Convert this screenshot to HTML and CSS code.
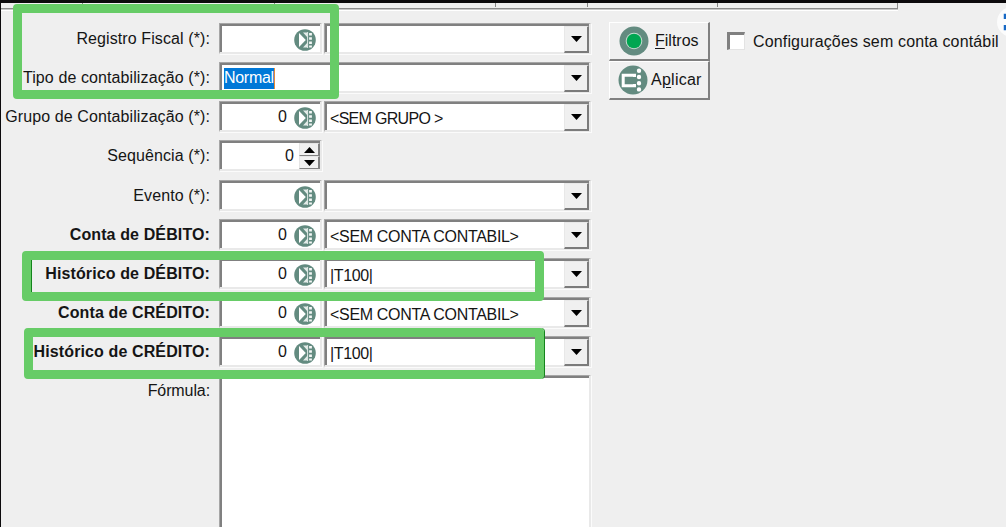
FILE: index.html
```
<!DOCTYPE html>
<html lang="pt-BR">
<head>
  <meta charset="UTF-8" />
  <title>Configurações contábeis</title>
  <link rel="stylesheet" href="styles.css">
</head>
<body>
  <svg width="0" height="0" class="defs">
    <symbol id="lookup" viewBox="0 0 22 22">
      <circle cx="11" cy="11" r="10.8" fill="#638b80"/>
      <path d="M5 4 L11.8 11 L5 18 Z" fill="#fff"/>
      <path d="M9 3.5 H14 V9 Z M9 18.5 H14 V13 Z" fill="#e4ece9"/>
      <path d="M13.6 3 V19" stroke="#dce6e3" stroke-width="1"/>
      <path d="M16.5 4 V18.5" stroke="#f4f7f6" stroke-width="2.8" stroke-dasharray="2.6 1.6"/>
    </symbol>
    <symbol id="down" viewBox="0 0 11 6"><path d="M0 0 H11 L5.5 6 Z"/></symbol>
  </svg>

  <div class="tabs"><i></i><i></i><i></i><i></i><i></i></div>

  <div class="page">
    <div class="form">
      <div class="row">
        <label class="l-registro">Registro Fiscal (*):</label>
        <div class="field code"><svg><use href="#lookup"/></svg></div>
        <div class="field combo"><span></span><button><svg><use href="#down"/></svg></button></div>
      </div>
      <div class="row">
        <label class="l-tipo">Tipo de contabilização (*):</label>
        <div class="field combo wide"><span><mark>Normal</mark></span><button><svg><use href="#down"/></svg></button></div>
      </div>
      <div class="row">
        <label class="l-grupo">Grupo de Contabilização (*):</label>
        <div class="field code">0<svg><use href="#lookup"/></svg></div>
        <div class="field combo"><span class="t-grupo">&lt;SEM GRUPO &gt;</span><button><svg><use href="#down"/></svg></button></div>
      </div>
      <div class="row seq">
        <label class="l-seq">Sequência (*):</label>
        <div class="field code spin">0
          <div class="arrows">
            <b><svg class="up"><use href="#down"/></svg></b>
            <b><svg><use href="#down"/></svg></b>
          </div>
        </div>
      </div>
      <div class="row">
        <label class="l-evento">Evento (*):</label>
        <div class="field code"><svg><use href="#lookup"/></svg></div>
        <div class="field combo"><span></span><button><svg><use href="#down"/></svg></button></div>
      </div>
      <div class="row bold">
        <label>Conta de DÉBITO:</label>
        <div class="field code">0<svg><use href="#lookup"/></svg></div>
        <div class="field combo"><span class="t-conta">&lt;SEM CONTA CONTABIL&gt;</span><button><svg><use href="#down"/></svg></button></div>
      </div>
      <div class="row bold">
        <label>Histórico de DÉBITO:</label>
        <div class="field code">0<svg><use href="#lookup"/></svg></div>
        <div class="field combo"><span class="t-hist">|T100|</span><button><svg><use href="#down"/></svg></button></div>
      </div>
      <div class="row bold">
        <label>Conta de CRÉDITO:</label>
        <div class="field code">0<svg><use href="#lookup"/></svg></div>
        <div class="field combo"><span class="t-conta">&lt;SEM CONTA CONTABIL&gt;</span><button><svg><use href="#down"/></svg></button></div>
      </div>
      <div class="row bold">
        <label>Histórico de CRÉDITO:</label>
        <div class="field code">0<svg><use href="#lookup"/></svg></div>
        <div class="field combo"><span class="t-hist">|T100|</span><button><svg><use href="#down"/></svg></button></div>
      </div>
      <div class="row formula">
        <label>Fórmula:</label>
        <div class="field memo"></div>
      </div>
    </div>

    <div class="actions">
      <button class="action">
        <svg viewBox="0 0 30 30"><circle cx="15" cy="15" r="14.5" fill="#638b80"/><circle cx="15" cy="15" r="8.3" fill="#c4dcd0"/><circle cx="15" cy="15" r="7.3" fill="#00a651"/></svg>
        <span><u>F</u>iltros</span>
      </button>
      <button class="action apply">
        <svg viewBox="0 0 30 30"><circle cx="15" cy="15" r="14.5" fill="#638b80"/><path d="M16.5 12 V10.2 H5.2 V20.8 H16.5 V19" fill="none" stroke="#fff" stroke-width="3"/><path d="M21 5.8 V26" fill="none" stroke="#fff" stroke-width="4.4" stroke-linecap="round" stroke-dasharray="0 6.2"/></svg>
        <span>A<u>p</u>licar</span>
      </button>
    </div>

    <div class="check"><i></i><span>Configurações sem conta contábil</span></div>
  </div>

  <div class="lens"><svg viewBox="0 0 30 30"><path d="M8 12 V8 H12 M8 18 V22 H12" fill="none" stroke="#1769c5" stroke-width="2.5"/></svg></div>

  <div class="highlight h-tipo"></div>
  <div class="highlight h-debito"></div>
  <div class="highlight h-credito"></div>
</body>
</html>
```
FILE: styles.css
```
* { box-sizing: border-box; }
body {
  margin: 0;
  width: 1006px;
  height: 527px;
  overflow: hidden;
  position: relative;
  background: #efefef;
  border-top: 3px solid #0c0a0c;
  border-left: 1px solid #0c0a0c;
  font: 16px/20px "Liberation Sans", Arial, sans-serif;
  color: #151515;
}
.defs { position: absolute; }
svg { display: block; }

/* bottom edge of the tab strip */
.tabs {
  display: flex;
  width: 897px;
  height: 6px;
  border-bottom: 1px solid #8c8c8c;
  border-right: 1px solid #8c8c8c;
  box-shadow: 0 1px 0 #c8c8c8, 0 2px 0 #fff;
}
.tabs i { border-right: 1px solid #888; height: 4px; }
.tabs i:nth-child(1) { width: 82px; }
.tabs i:nth-child(2) { width: 192px; }
.tabs i:nth-child(3) { width: 221px; }
.tabs i:nth-child(4) { width: 92px; }
.tabs i:nth-child(5) { width: 130px; }

.page { display: flex; padding-top: 14px; }
.form { width: 590px; }
.row {
  display: flex;
  height: 31px;
  margin-bottom: 8px;
}
.row label {
  width: 209px;
  margin-right: 9px;
  padding-top: 6px;
  text-align: right;
  white-space: nowrap;
  letter-spacing: 0.1px;
}
.seq { margin-bottom: 9px; }
.row.bold label {
  font-weight: bold;
  letter-spacing: 0.12px;
}
.row.formula label { letter-spacing: -0.1px; }

.field {
  height: 31px;
  padding: 2px 0 0 2px;
  background: #fff;
  border: 1px solid #a6a6a6;
  border-right: 2px solid #e9e9e9;
  border-bottom: 2px solid #e9e9e9;
  box-shadow: inset 2px 2px 0 #808080, 1px 1px 0 #fbfbfb;
}
.code {
  display: flex;
  justify-content: flex-end;
  width: 103px;
  margin-right: 2px;
  padding-top: 5px;
}
.code > svg {
  width: 22px;
  height: 22px;
  margin: 0 4px 0 7px;
}
.combo {
  display: flex;
  width: 267px;
}
.combo.wide { width: 372px; }
.combo span {
  flex: 1;
  padding: 5px 0 0 3px;
  white-space: nowrap;
}
.combo.wide span { padding: 3px 0 0 2px; }
.combo .t-grupo { letter-spacing: -0.7px; }
.combo .t-conta { letter-spacing: -0.32px; }
.combo .t-hist { letter-spacing: -0.4px; }
mark {
  display: inline-block;
  height: 21px;
  background: #0078d7;
  color: #fff;
  border-right: 1px solid #e88b35;
  letter-spacing: -0.3px;
}
.combo button {
  width: 25px;
  height: 27px;
  padding: 0 0 0 6px;
  background: #f0f0f0;
  border: 1px solid #e8e8e8;
  border-right: 2px solid #7b7b7b;
  border-bottom: 2px solid #7b7b7b;
}
.combo svg, .arrows svg {
  width: 11px;
  height: 6px;
}
.arrows {
  width: 21px;
  margin: -3px 0 0 5px;
}
.arrows b {
  display: flex;
  height: 13px;
  align-items: center;
  justify-content: center;
  background: #f0f0f0;
  border: 1px solid #e5e5e5;
  border-right: 2px solid #808080;
  border-bottom-color: #808080;
}
.arrows .up { transform: scaleY(-1); }
.memo {
  width: 372px;
  height: 160px;
}

.actions {
  margin-left: 18px;
  margin-top: -1px;
}
.action {
  display: flex;
  align-items: center;
  width: 101px;
  height: 39px;
  padding: 0 0 0 9px;
  background: #f0f0f0;
  border: 1px solid #fff;
  border-right: 2px solid #808080;
  border-bottom: 2px solid #808080;
  font: inherit;
  color: inherit;
}
.action svg {
  width: 30px;
  height: 30px;
}
.action span { margin-left: 6px; }
.action u { text-underline-offset: 2px; }
.apply { padding-left: 8px; }
.apply span {
  margin-left: 3px;
  letter-spacing: 0.25px;
}

.check {
  display: flex;
  margin: 9px 0 0 17px;
  height: 20px;
}
.check i {
  width: 18px;
  height: 18px;
  background: #fff;
  border: 3px solid #808080;
  border-right: 1px solid #e3e3e3;
  border-bottom: 1px solid #e3e3e3;
}
.check span {
  margin-left: 8px;
  white-space: nowrap;
  letter-spacing: 0.15px;
}

.lens {
  position: absolute;
  left: 996px;
  top: 4px;
  width: 30px;
  height: 30px;
  border-radius: 50%;
  background: #fcfcfc;
}

/* marker boxes drawn over the form */
.highlight {
  position: absolute;
  border: 9px solid #67cc67;
  border-radius: 4px;
}
.h-tipo { left: 12px; top: 1px; width: 326px; height: 95px; }
.h-debito { left: 21px; top: 248px; width: 522px; height: 50px; box-shadow: inset 1px 0 0 #14851c; }
.h-credito { left: 23px; top: 325px; width: 520px; height: 51px; box-shadow: 1px 0 0 #14851c; }
```
